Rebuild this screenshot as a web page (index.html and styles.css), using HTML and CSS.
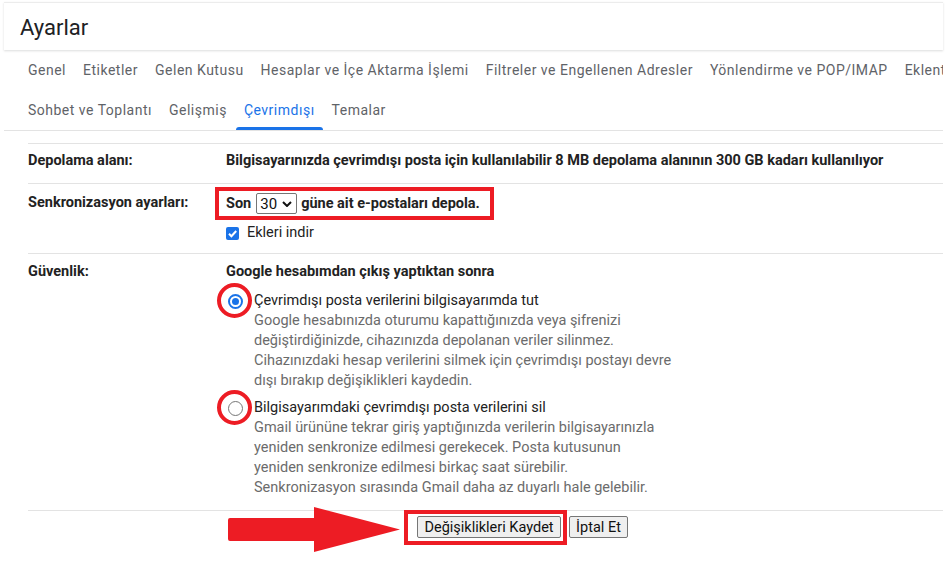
FILE: index.html
```html
<!DOCTYPE html>
<html lang="tr">
<head>
<meta charset="utf-8">
<title>Ayarlar</title>
<link rel="stylesheet" href="styles.css">
</head>
<body>
<div class="page">
  <header class="head">
    <h1 class="title">Ayarlar</h1>
  </header>
  <nav class="tabs">
    <div class="tab-row">
      <span class="tab">Genel</span>
      <span class="tab">Etiketler</span>
      <span class="tab">Gelen Kutusu</span>
      <span class="tab">Hesaplar ve İçe Aktarma İşlemi</span>
      <span class="tab">Filtreler ve Engellenen Adresler</span>
      <span class="tab">Yönlendirme ve POP/IMAP</span>
      <span class="tab">Eklentiler</span>
    </div>
    <div class="tab-row">
      <span class="tab">Sohbet ve Toplantı</span>
      <span class="tab">Gelişmiş</span>
      <span class="tab active">Çevrimdışı</span>
      <span class="tab">Temalar</span>
    </div>
  </nav>
  <div class="settings">
    <div class="row row-storage">
      <div class="label">Depolama alanı:</div>
      <div class="value strong">Bilgisayarınızda çevrimdışı posta için kullanılabilir 8 MB depolama alanının 300 GB kadarı kullanılıyor</div>
    </div>
    <div class="row row-sync">
      <div class="label">Senkronizasyon ayarları:</div>
      <div class="value">
        <div class="sync strong">
          <span>Son</span>
          <span class="select">30<svg class="chev" viewBox="0 0 10 6" width="10" height="6"><path d="M1 1l4 4 4-4" fill="none" stroke="#111" stroke-width="2"/></svg></span>
          <span>güne ait e-postaları depola.</span>
        </div>
        <div class="check-line">
          <span class="checkbox"><svg viewBox="0 0 13 13" width="13" height="13"><path d="M3 6.8l2.4 2.4L10.2 4" fill="none" stroke="#fff" stroke-width="2"/></svg></span>
          <span>Ekleri indir</span>
        </div>
      </div>
    </div>
    <div class="row row-security">
      <div class="label">Güvenlik:</div>
      <div class="value">
        <div class="strong">Google hesabımdan çıkış yaptıktan sonra</div>
        <div class="option option-first">
          <span class="radio checked"></span>
          <div class="option-text">
            <div class="option-title">Çevrimdışı posta verilerini bilgisayarımda tut</div>
            <div class="desc">Google hesabınızda oturumu kapattığınızda veya şifrenizi<br>değiştirdiğinizde, cihazınızda depolanan veriler silinmez.<br>Cihazınızdaki hesap verilerini silmek için çevrimdışı postayı devre<br>dışı bırakıp değişiklikleri kaydedin.</div>
          </div>
        </div>
        <div class="option option-second">
          <span class="radio"></span>
          <div class="option-text">
            <div class="option-title">Bilgisayarımdaki çevrimdışı posta verilerini sil</div>
            <div class="desc">Gmail ürününe tekrar giriş yaptığınızda verilerin bilgisayarınızla<br>yeniden senkronize edilmesi gerekecek. Posta kutusunun<br>yeniden senkronize edilmesi birkaç saat sürebilir.<br>Senkronizasyon sırasında Gmail daha az duyarlı hale gelebilir.</div>
          </div>
        </div>
      </div>
    </div>
    <div class="actions">
      <svg class="arrow" viewBox="0 0 174 47" width="174" height="47"><path d="M2 12h84V1l86 22.5L86 46V35H2q-2 0-2-2V14q0-2 2-2z" fill="#ed1c24"/></svg>
      <span class="mark-box"><button class="btn" type="button">Değişiklikleri Kaydet</button></span>
      <button class="btn btn-cancel" type="button">İptal Et</button>
    </div>
  </div>
</div>
</body>
</html>
```
FILE: styles.css
```css
body {
  margin: 0;
  background: #fff;
  font-family: Roboto, "Liberation Sans", Arial, sans-serif;
  color: #222;
}

.page {
  padding: 2px 0 0 4px;
  width: 939px;
}

.head {
  border-top: 1px solid #ececec;
  height: 47px;
  box-shadow: 0 1px 2px rgba(60, 64, 67, 0.18);
  position: relative;
}

.title {
  margin: 0;
  padding: 11px 0 0 16px;
  font-weight: 400;
  font-size: 22px;
  line-height: 28px;
  color: #202124;
}

.tabs {
  padding-left: 16px;
  border-bottom: 1px solid #e3e3e3;
}

.tab-row {
  display: flex;
  height: 40px;
  white-space: nowrap;
  overflow: hidden;
}

.tab {
  display: flex;
  align-items: center;
  padding: 0 8px;
  margin-right: 1px;
  font-size: 14px;
  letter-spacing: 0.5px;
  color: #5f6368;
  position: relative;
  flex: none;
}

.tab.active {
  color: #1a73e8;
}

.tab.active::after {
  content: "";
  position: absolute;
  left: 0;
  right: 0;
  bottom: 0;
  height: 3px;
  background: #1a73e8;
  border-radius: 3px 3px 0 0;
}

.settings {
  margin: 12px 0 0 24px;
  font-size: 14.5px;
  line-height: 20px;
}

.row {
  display: flex;
  border-top: 1px solid #e3e3e3;
}

.label {
  width: 198px;
  flex: none;
  font-weight: 700;
}

.value {
  flex: 1;
}

.strong {
  font-weight: 700;
}

.row-storage {
  padding: 7px 0 12px;
}

.row-sync {
  padding: 9px 0 10px;
}

.sync {
  display: inline-flex;
  align-items: center;
  height: 21px;
  position: relative;
}

.sync::before {
  content: "";
  position: absolute;
  left: -11px;
  right: -14px;
  top: -6px;
  bottom: -6px;
  border: 4px solid #ed1c24;
}

.select {
  display: inline-flex;
  align-items: center;
  gap: 5px;
  box-sizing: border-box;
  height: 21px;
  margin: 0 4px 0 5px;
  padding: 0 4px 0 3px;
  border: 1px solid #767676;
  border-radius: 2px;
  font-weight: 400;
  font-size: 15px;
  color: #111;
}

.check-line {
  display: flex;
  align-items: center;
  margin-top: 9px;
  height: 20px;
}

.checkbox {
  width: 13px;
  height: 13px;
  border-radius: 2px;
  background: #1a73e8;
  margin-right: 8px;
  display: block;
}

.checkbox svg {
  display: block;
}

.row-security {
  padding: 8px 0 12px;
  border-bottom: 1px solid #e3e3e3;
}

.option {
  display: flex;
  align-items: flex-start;
}

.option-first {
  margin-top: 9px;
}

.option-second {
  margin-top: 7px;
}

.radio {
  position: relative;
  flex: none;
  box-sizing: border-box;
  width: 15px;
  height: 15px;
  margin: 3px 11px 0 2px;
  border: 1px solid #767676;
  border-radius: 50%;
  background: #fff;
}

.radio.checked {
  border: 2px solid #1a73e8;
}

.radio.checked::before {
  content: "";
  position: absolute;
  left: 2px;
  top: 2px;
  width: 7px;
  height: 7px;
  border-radius: 50%;
  background: #1a73e8;
}

.radio::after {
  content: "";
  position: absolute;
  left: -12px;
  top: -12px;
  width: 35px;
  height: 35px;
  box-sizing: border-box;
  border: 4px solid #ed1c24;
  border-radius: 50%;
}

.radio.checked::after {
  left: -13px;
  top: -13px;
}

.option-title {
  color: #222;
}

.desc {
  color: #6b6b6b;
}

.actions {
  display: flex;
  align-items: flex-start;
  margin-top: -5px;
  padding-left: 200px;
  height: 60px;
}

.arrow {
  display: block;
  flex: none;
}

.mark-box {
  display: block;
  margin: 4px 0 0 2px;
  padding: 2px 2px 3px 9px;
  border: 4px solid #ed1c24;
}

.btn {
  display: block;
  box-sizing: border-box;
  height: 22px;
  margin: 0;
  padding: 0 6px;
  border: 1px solid #767676;
  border-radius: 2px;
  background: #efefef;
  font-family: Roboto, "Liberation Sans", Arial, sans-serif;
  font-size: 14.5px;
  color: #111;
  white-space: nowrap;
}

.mark-box .btn {
  width: 144px;
}

.btn-cancel {
  margin: 10px 0 0 2px;
  min-width: 59px;
}
```
